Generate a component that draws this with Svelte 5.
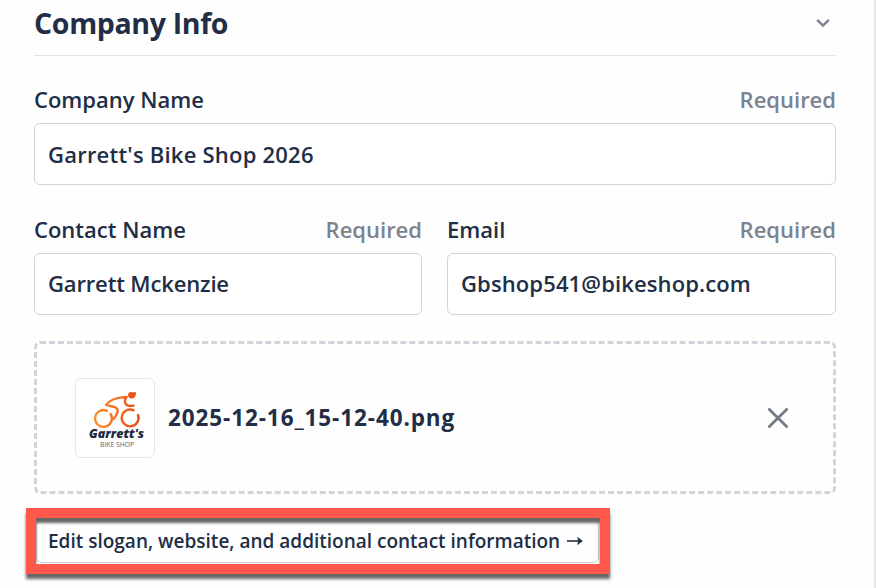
<script lang="ts">
    let companyName = $state("Garrett's Bike Shop 2026");
    let contactName = $state("Garrett Mckenzie");
    let email = $state("Gbshop541@bikeshop.com");
    let fileName = $state("2025-12-16_15-12-40.png");
</script>

{#snippet labelRow(id: string, text: string)}
    <div class="label-row">
        <label for={id}>{text}</label>
        <span class="required">Required</span>
    </div>
{/snippet}

<main class="panel">
    <header>
        <h2>Company Info</h2>
        <svg class="chevron" viewBox="0 0 14 10" aria-hidden="true">
            <path d="M1.2 1.8 7 7.6l5.8-5.8" />
        </svg>
    </header>

    <div class="field">
        {@render labelRow("company-name", "Company Name")}
        <input id="company-name" class="company-value" bind:value={companyName} />
    </div>

    <div class="columns">
        <div class="field">
            {@render labelRow("contact-name", "Contact Name")}
            <input id="contact-name" class="contact-value" bind:value={contactName} />
        </div>
        <div class="field">
            {@render labelRow("email", "Email")}
            <input id="email" class="email-value" bind:value={email} />
        </div>
    </div>

    <div class="dropzone">
        <div class="thumbnail">
            <svg viewBox="0 0 80 80" role="img" aria-label="Garrett's Bike Shop">
                <defs>
                    <linearGradient id="flame" gradientUnits="userSpaceOnUse" x1="18" y1="0" x2="66" y2="0">
                        <stop offset="0" stop-color="#f9962e" />
                        <stop offset="0.6" stop-color="#f2641c" />
                        <stop offset="1" stop-color="#ec4a16" />
                    </linearGradient>
                </defs>
                <g class="bike">
                    <path d="M35.6 36A8.4 8.4 0 1 1 31.9 32.8" />
                    <path d="M63 37A8.4 8.4 0 1 1 58.6 32.3" />
                    <path d="M31.2 27C34 22.3 39 19.6 51.6 18.9 49.8 21 49.4 23.8 51 26.4 53 28.3 56 28.2 58.6 27.6" />
                    <path d="M31.2 26.6C34.5 29 41.5 27.7 42.6 31.8 43.2 35.5 40.5 38.5 38.4 41" />
                </g>
                <path class="head" d="M53 17.2c0-2.4 2-3.4 4-3 1.4.2 2.6.2 4 0 .2 3.6-1.2 6.3-4.2 6.3-2.2 0-3.8-1.5-3.8-3.3Z" />
                <text class="logo-name" x="41.5" y="60.3" textLength="55" lengthAdjust="spacingAndGlyphs">Garrett's</text>
                <text class="logo-kind" x="42" y="68.6" textLength="34" lengthAdjust="spacingAndGlyphs">BIKE SHOP</text>
            </svg>
        </div>
        <span class="file-name">{fileName}</span>
        <button type="button" class="remove" aria-label="Remove file">
            <svg viewBox="0 0 20 20">
                <path d="M1.4 1.4 18.6 18.6M18.6 1.4 1.4 18.6" />
            </svg>
        </button>
    </div>

    <div class="highlight">
        <button type="button" class="edit">
            <span>Edit slogan, website, and additional contact information</span>
            <svg viewBox="0 0 16 10" aria-hidden="true">
                <path class="shaft" d="M0 5h12" />
                <path class="tip" d="M10.2.8 15.8 5l-5.6 4.2 1-4.2Z" />
            </svg>
        </button>
    </div>
</main>

<style>
    :global(body) {
        background: #fff;
    }

    .panel {
        box-sizing: border-box;
        width: 876px;
        height: 588px;
        padding: 0 38px 0 34px;
        border-right: 2px solid #e6e6e6;
        overflow: hidden;
        background: #fefefe;
        color: #212e45;
        font-family: "Open Sans", "Noto Sans", sans-serif;
        font-size: 22px;
        font-weight: 600;
    }

    header {
        display: flex;
        align-items: center;
        justify-content: space-between;
        box-sizing: border-box;
        height: 56px;
        margin-bottom: 30px;
        padding: 0 6px 9px 0;
        border-bottom: 1px solid #e3e4e6;
    }

    h2 {
        margin: 0;
        font-size: 28.5px;
        font-weight: 700;
        letter-spacing: -0.34px;
        line-height: 40px;
        white-space: nowrap;
    }

    .chevron {
        width: 14px;
        height: 10px;
        fill: none;
        stroke: #7b838f;
        stroke-width: 2.4;
    }

    .field {
        min-width: 0;
    }

    .label-row {
        display: flex;
        justify-content: space-between;
        height: 37px;
        line-height: 26px;
        white-space: nowrap;
    }

    .required {
        color: #7b838f;
    }

    input {
        display: block;
        box-sizing: border-box;
        width: 100%;
        height: 62px;
        padding: 0 13px;
        border: 1px solid #d0d3d8;
        border-radius: 6px;
        outline: none;
        background: #fff;
        color: inherit;
        font: inherit;
    }

    .company-value {
        letter-spacing: 0.22px;
    }

    .contact-value {
        padding-bottom: 2px;
        letter-spacing: -0.15px;
    }

    .email-value {
        padding-bottom: 2px;
        letter-spacing: 0.12px;
    }

    .columns {
        display: grid;
        grid-template-columns: 388px 389px;
        gap: 25px;
        margin: 31px 0 26px;
    }

    .dropzone {
        display: flex;
        align-items: center;
        box-sizing: border-box;
        height: 153px;
        padding: 0 45px 0 38px;
        border: 3px dashed #d1d5db;
        border-radius: 6px;
    }

    .thumbnail {
        box-sizing: border-box;
        width: 80px;
        height: 80px;
        margin-right: 13px;
        border: 1px solid #e4e6e9;
        border-radius: 6px;
        background: #fff;
    }

    .thumbnail svg {
        display: block;
        width: 80px;
        height: 80px;
        margin: -1px;
    }

    .bike {
        fill: none;
        stroke: url(#flame);
        stroke-width: 2.4;
        stroke-linecap: round;
        stroke-linejoin: round;
    }

    .head {
        fill: #ee5218;
    }

    .logo-name {
        fill: #1d2b42;
        font: italic 800 11.5px "Open Sans", sans-serif;
        text-anchor: middle;
    }

    .logo-kind {
        fill: #58616f;
        font: 400 6.5px "Open Sans", sans-serif;
        text-anchor: middle;
    }

    .file-name {
        padding-bottom: 1px;
        font-size: 22.5px;
        font-weight: 700;
        letter-spacing: 0.9px;
        white-space: nowrap;
    }

    .remove {
        margin-left: auto;
        padding: 0;
        border: 0;
        background: none;
        cursor: pointer;
    }

    .remove svg {
        display: block;
        width: 20px;
        height: 20px;
        fill: none;
        stroke: #737b88;
        stroke-width: 2.8;
        stroke-linecap: round;
    }

    .highlight {
        box-sizing: border-box;
        width: 584px;
        height: 66px;
        margin: 14px 0 0 -8px;
        border: 10px solid #ff584b;
        box-shadow:
            0 5px 3px rgba(0, 0, 0, 0.6),
            inset 0 5px 3px rgba(0, 0, 0, 0.6);
    }

    .edit {
        display: flex;
        align-items: center;
        box-sizing: border-box;
        width: 563px;
        height: 43px;
        margin-top: 2px;
        padding: 0 0 2px 11px;
        border: 1px solid rgba(90, 100, 115, 0.3);
        border-radius: 6px;
        background: none;
        color: inherit;
        font: inherit;
        font-size: 19px;
        white-space: nowrap;
        cursor: pointer;
    }

    .edit svg {
        width: 16px;
        height: 10px;
        margin-left: 7px;
    }

    .shaft {
        stroke: #212e45;
        stroke-width: 1.6;
    }

    .tip {
        fill: #212e45;
    }
</style>
